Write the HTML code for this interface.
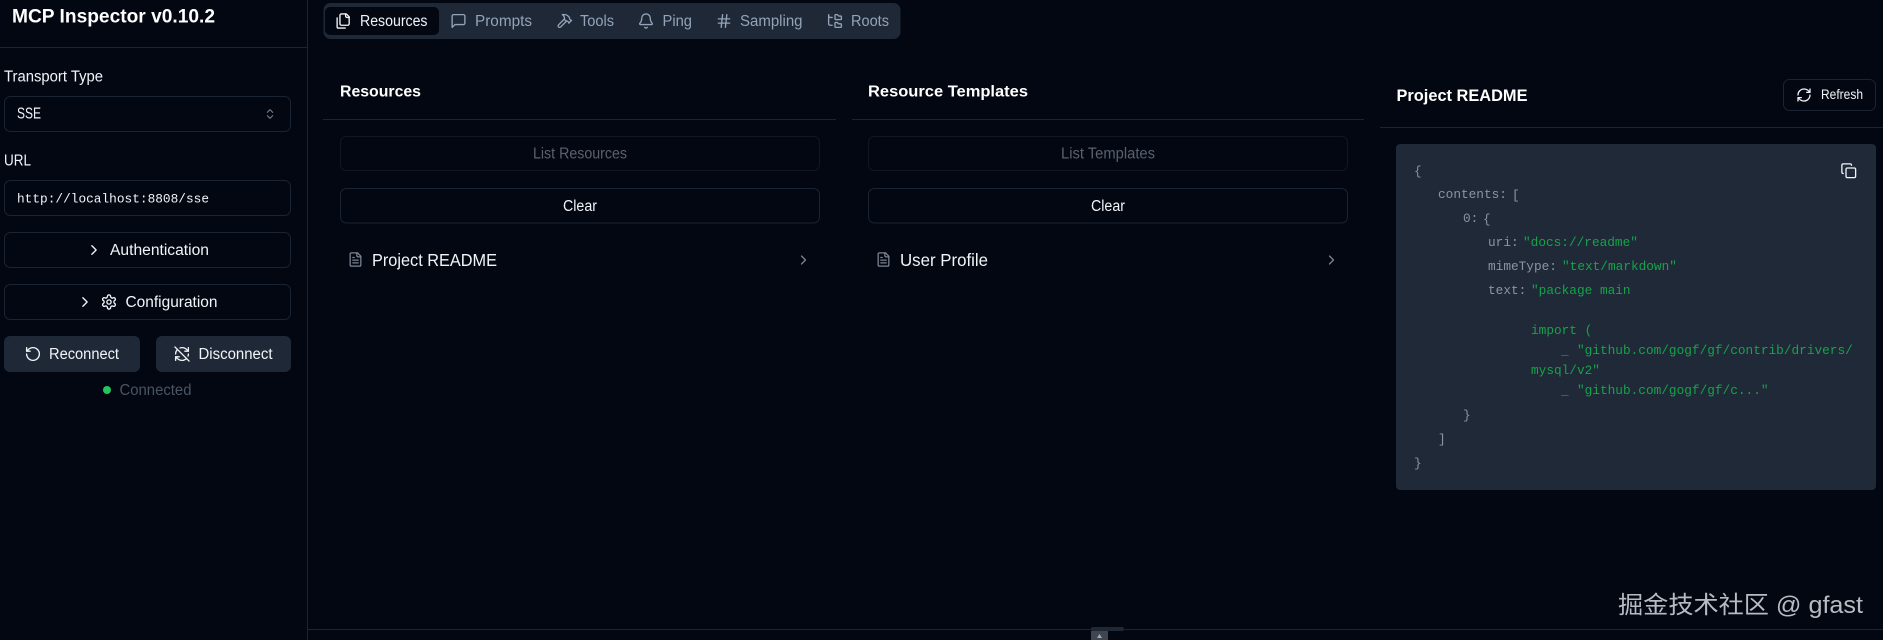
<!DOCTYPE html>
<html lang="en"><head><meta charset="utf-8"><title>MCP Inspector</title>
<style>
html,body{margin:0;padding:0;background:#020712;width:1883px;height:640px;overflow:hidden}
svg{display:block}
text{font-family:"Liberation Sans","Noto Sans CJK SC",sans-serif;font-size:15.5px;fill:#f1f5f9}
.b{font-weight:700;fill:#fff}
.m{font-family:"Liberation Mono",monospace;font-size:12.78px;fill:#8b94a1}
.g{fill:#16a34a}
.t{fill:#94a3b8}
.i{fill:none;stroke-width:1.9;stroke-linecap:round;stroke-linejoin:round}
</style></head><body>
<svg width="1883" height="640" viewBox="0 0 1883 640" xmlns="http://www.w3.org/2000/svg">
<defs>
<symbol id="files" viewBox="0 0 24 24"><path d="M20 7h-3a2 2 0 0 1-2-2V2"/><path d="M9 18a2 2 0 0 1-2-2V4a2 2 0 0 1 2-2h7l4 4v10a2 2 0 0 1-2 2Z"/><path d="M3 7.6v12.8A1.6 1.6 0 0 0 4.6 22h9.8"/></symbol>
<symbol id="msg" viewBox="0 0 24 24"><path d="M21 15a2 2 0 0 1-2 2H7l-4 4V5a2 2 0 0 1 2-2h14a2 2 0 0 1 2 2z"/></symbol>
<symbol id="hammer" viewBox="0 0 24 24"><path d="m15 12-8.373 8.373a1 1 0 1 1-3-3L12 9"/><path d="m18 15 4-4"/><path d="m21.5 11.5-1.914-1.914A2 2 0 0 1 19 8.172V7l-2.26-2.26a6 6 0 0 0-4.202-1.756L9 2.96l.92.82A6.18 6.18 0 0 1 12 8.4V10l2 2h1.172a2 2 0 0 1 1.414.586L18.5 14.5"/></symbol>
<symbol id="bell" viewBox="0 0 24 24"><path d="M10.268 21a2 2 0 0 0 3.464 0"/><path d="M3.262 15.326A1 1 0 0 0 4 17h16a1 1 0 0 0 .74-1.673C19.41 13.956 18 12.499 18 8A6 6 0 0 0 6 8c0 4.499-1.411 5.956-2.738 7.326"/></symbol>
<symbol id="hash" viewBox="0 0 24 24"><path d="M4 9h16M4 15h16M10 3 8 21M16 3l-2 18"/></symbol>
<symbol id="tree" viewBox="0 0 24 24"><path d="M20 10a1 1 0 0 0 1-1V6a1 1 0 0 0-1-1h-2.5a1 1 0 0 1-.8-.4l-.9-1.2A1 1 0 0 0 15 3h-2a1 1 0 0 0-1 1v5a1 1 0 0 0 1 1Z"/><path d="M20 21a1 1 0 0 0 1-1v-3a1 1 0 0 0-1-1h-2.9a1 1 0 0 1-.88-.55l-.42-.85a1 1 0 0 0-.92-.6H13a1 1 0 0 0-1 1v5a1 1 0 0 0 1 1Z"/><path d="M3 5a2 2 0 0 0 2 2h3"/><path d="M3 3v13a2 2 0 0 0 2 2h3"/></symbol>
<symbol id="chev" viewBox="0 0 24 24"><path d="m9 18 6-6-6-6"/></symbol>
<symbol id="updown" viewBox="0 0 24 24"><path d="m7 15 5 5 5-5"/><path d="m7 9 5-5 5 5"/></symbol>
<symbol id="gear" viewBox="0 0 24 24"><path d="M12.22 2h-.44a2 2 0 0 0-2 2v.18a2 2 0 0 1-1 1.73l-.43.25a2 2 0 0 1-2 0l-.15-.08a2 2 0 0 0-2.73.73l-.22.38a2 2 0 0 0 .73 2.73l.15.1a2 2 0 0 1 1 1.72v.51a2 2 0 0 1-1 1.74l-.15.09a2 2 0 0 0-.73 2.73l.22.38a2 2 0 0 0 2.73.73l.15-.08a2 2 0 0 1 2 0l.43.25a2 2 0 0 1 1 1.73V20a2 2 0 0 0 2 2h.44a2 2 0 0 0 2-2v-.18a2 2 0 0 1 1-1.73l.43-.25a2 2 0 0 1 2 0l.15.08a2 2 0 0 0 2.73-.73l.22-.39a2 2 0 0 0-.73-2.73l-.15-.08a2 2 0 0 1-1-1.74v-.5a2 2 0 0 1 1-1.74l.15-.09a2 2 0 0 0 .73-2.73l-.22-.38a2 2 0 0 0-2.73-.73l-.15.08a2 2 0 0 1-2 0l-.43-.25a2 2 0 0 1-1-1.73V4a2 2 0 0 0-2-2z"/><circle cx="12" cy="12" r="3"/></symbol>
<symbol id="ccw" viewBox="0 0 24 24"><path d="M3 12a9 9 0 1 0 9-9 9.75 9.75 0 0 0-6.74 2.74L3 8"/><path d="M3 3v5h5"/></symbol>
<symbol id="off" viewBox="0 0 24 24"><path d="M21 8L18.74 5.74A9.75 9.75 0 0 0 12 3C11 3 10.03 3.16 9.13 3.47"/><path d="M8 16H3v5"/><path d="M3 12C3 9.51 4 7.26 5.64 5.64"/><path d="m3 16 2.26 2.26A9.75 9.75 0 0 0 12 21c2.49 0 4.74-1 6.36-2.64"/><path d="M21 12c0 1-.16 1.97-.47 2.87"/><path d="M21 3v5h-5"/><path d="M22 22 2 2"/></symbol>
<symbol id="cw" viewBox="0 0 24 24"><path d="M3 12a9 9 0 0 1 9-9 9.75 9.75 0 0 1 6.74 2.74L21 8"/><path d="M21 3v5h-5"/><path d="M21 12a9 9 0 0 1-9 9 9.75 9.75 0 0 1-6.74-2.74L3 16"/><path d="M8 16H3v5"/></symbol>
<symbol id="copy" viewBox="0 0 24 24"><rect x="8" y="8" width="14" height="14" rx="2"/><path d="M4 16c-1.1 0-2-.9-2-2V4c0-1.1.9-2 2-2h10c1.1 0 2 .9 2 2"/></symbol>
<symbol id="file" viewBox="0 0 24 24"><path d="M15 2H6a2 2 0 0 0-2 2v16a2 2 0 0 0 2 2h12a2 2 0 0 0 2-2V7Z"/><path d="M14 2v4a2 2 0 0 0 2 2h4"/><path d="M10 9H8"/><path d="M16 13H8"/><path d="M16 17H8"/></symbol>
</defs>
<rect width="1883" height="640" fill="#020712"/>

<!-- sidebar -->
<rect x="307" y="0" width="1" height="640" fill="#1b2433"/>
<rect x="0" y="47" width="307" height="1" fill="#1b2433"/>
<text class="b" x="12" y="22.500" style="font-size:19px" textLength="203" lengthAdjust="spacingAndGlyphs">MCP Inspector v0.10.2</text>
<text x="4" y="81.500" textLength="99" lengthAdjust="spacingAndGlyphs">Transport Type</text>
<rect x="4.500" y="96.500" width="286" height="35" rx="6" fill="none" stroke="#1b2433"/>
<text x="17" y="118.500" textLength="24" lengthAdjust="spacingAndGlyphs">SSE</text>
<use href="#updown" x="263.500" y="107.500" width="13" height="13" class="i" stroke="#7c8594"/>
<text x="4" y="165.500" textLength="27" lengthAdjust="spacingAndGlyphs">URL</text>
<rect x="4.500" y="180.500" width="286" height="35" rx="6" fill="none" stroke="#1b2433"/>
<text class="m" x="17" y="202.500" style="fill:#f1f5f9" textLength="192">http://localhost:8808/sse</text>
<rect x="4.500" y="232.500" width="286" height="35" rx="6" fill="none" stroke="#1b2433"/>
<use href="#chev" x="85.500" y="241.500" width="17" height="17" class="i" stroke="#f1f5f9"/>
<text x="110" y="255" textLength="99" lengthAdjust="spacingAndGlyphs">Authentication</text>
<rect x="4.500" y="284.500" width="286" height="35" rx="6" fill="none" stroke="#1b2433"/>
<use href="#chev" x="76.500" y="293.500" width="17" height="17" class="i" stroke="#f1f5f9"/>
<use href="#gear" x="100.500" y="293.500" width="17" height="17" class="i" stroke="#f1f5f9"/>
<text x="125.500" y="307" textLength="92" lengthAdjust="spacingAndGlyphs">Configuration</text>
<rect x="4" y="336" width="136" height="36" rx="6" fill="#1e2836"/>
<use href="#ccw" x="24.500" y="345.500" width="17" height="17" class="i" stroke="#f1f5f9"/>
<text x="49" y="359" textLength="70" lengthAdjust="spacingAndGlyphs">Reconnect</text>
<rect x="156" y="336" width="135" height="36" rx="6" fill="#1e2836"/>
<use href="#off" x="173.500" y="345.500" width="17" height="17" class="i" stroke="#f1f5f9"/>
<text x="198.500" y="359" textLength="74" lengthAdjust="spacingAndGlyphs">Disconnect</text>
<circle cx="107" cy="390" r="4" fill="#22c55e"/>
<text x="119.500" y="395" textLength="72" lengthAdjust="spacingAndGlyphs" style="fill:#4b5462">Connected</text>

<!-- tabs -->
<rect x="323.500" y="3" width="577" height="36" rx="7" fill="#1e2836"/>
<rect x="325" y="7" width="114" height="28" rx="5" fill="#020712"/>
<use href="#files" x="335" y="12.500" width="17" height="17" class="i" stroke="#f1f5f9"/>
<text x="360" y="26" textLength="67.500" lengthAdjust="spacingAndGlyphs">Resources</text>
<use href="#msg" x="450" y="12.500" width="17" height="17" class="i" stroke="#94a3b8"/>
<text class="t" x="475" y="26" textLength="57" lengthAdjust="spacingAndGlyphs">Prompts</text>
<use href="#hammer" x="556" y="12.500" width="17" height="17" class="i" stroke="#94a3b8"/>
<text class="t" x="580" y="26" textLength="34" lengthAdjust="spacingAndGlyphs">Tools</text>
<use href="#bell" x="637.500" y="12.500" width="17" height="17" class="i" stroke="#94a3b8"/>
<text class="t" x="662.500" y="26" textLength="29.500" lengthAdjust="spacingAndGlyphs">Ping</text>
<use href="#hash" x="715.500" y="12.500" width="17" height="17" class="i" stroke="#94a3b8"/>
<text class="t" x="740" y="26" textLength="62.500" lengthAdjust="spacingAndGlyphs">Sampling</text>
<use href="#tree" x="826.500" y="12.500" width="17" height="17" class="i" stroke="#94a3b8"/>
<text class="t" x="851" y="26" textLength="38" lengthAdjust="spacingAndGlyphs">Roots</text>

<!-- resources column -->
<text class="b" x="340" y="96.500" style="font-size:16px" textLength="81" lengthAdjust="spacingAndGlyphs">Resources</text>
<rect x="323" y="119" width="513" height="1" fill="#1b2433"/>
<rect x="340.500" y="136.500" width="479" height="34" rx="6" fill="none" stroke="#111825"/>
<text x="533" y="158.500" textLength="94" lengthAdjust="spacingAndGlyphs" style="fill:#5a616d">List Resources</text>
<rect x="340.500" y="188.500" width="479" height="34.500" rx="6" fill="none" stroke="#1b2433"/>
<text x="563" y="211" textLength="34" lengthAdjust="spacingAndGlyphs">Clear</text>
<use href="#file" x="347.500" y="251.500" width="16" height="16" class="i" stroke="#7c8594"/>
<text x="372" y="266" style="font-size:17.500px" textLength="125" lengthAdjust="spacingAndGlyphs">Project README</text>
<use href="#chev" x="795.500" y="252" width="16" height="16" class="i" stroke="#7c8594"/>

<!-- templates column -->
<text class="b" x="868" y="96.500" style="font-size:16px" textLength="160" lengthAdjust="spacingAndGlyphs">Resource Templates</text>
<rect x="852" y="119" width="512" height="1" fill="#1b2433"/>
<rect x="868.500" y="136.500" width="479" height="34" rx="6" fill="none" stroke="#111825"/>
<text x="1061" y="158.500" textLength="94" lengthAdjust="spacingAndGlyphs" style="fill:#5a616d">List Templates</text>
<rect x="868.500" y="188.500" width="479" height="34.500" rx="6" fill="none" stroke="#1b2433"/>
<text x="1091" y="211" textLength="34" lengthAdjust="spacingAndGlyphs">Clear</text>
<use href="#file" x="875.500" y="251.500" width="16" height="16" class="i" stroke="#7c8594"/>
<text x="900" y="266" style="font-size:17.500px" textLength="88" lengthAdjust="spacingAndGlyphs">User Profile</text>
<use href="#chev" x="1323.500" y="252" width="16" height="16" class="i" stroke="#7c8594"/>

<!-- readme panel -->
<text class="b" x="1396.500" y="101" style="font-size:17px" textLength="131" lengthAdjust="spacingAndGlyphs">Project README</text>
<rect x="1783.500" y="79.500" width="92" height="31" rx="6" fill="none" stroke="#1b2433"/>
<use href="#cw" x="1796" y="87" width="16" height="16" class="i" stroke="#f1f5f9"/>
<text x="1821" y="99" style="font-size:14px" textLength="42" lengthAdjust="spacingAndGlyphs">Refresh</text>
<rect x="1380" y="127" width="503" height="1" fill="#1b2433"/>
<rect x="1396" y="144" width="480" height="346" rx="4" fill="#1f2937"/>
<use href="#copy" x="1840.500" y="162.500" width="16.500" height="16.500" class="i" stroke="#f1f5f9"/>
<text class="m" x="1414" y="175">{</text>
<text class="m" x="1438" y="198">contents:</text><text class="m" x="1512" y="199">[</text>
<text class="m" x="1463" y="222">0:</text><text class="m" x="1483" y="223">{</text>
<text class="m" x="1488" y="246">uri:</text><text class="m g" x="1523" y="246">"docs://readme"</text>
<text class="m" x="1488" y="270">mimeType:</text><text class="m g" x="1562" y="270">"text/markdown"</text>
<text class="m" x="1488" y="294">text:</text><text class="m g" x="1531" y="294">"package main</text>
<text class="m g" x="1531" y="334">import (</text>
<text class="m g" x="1561" y="354">_</text><text class="m g" x="1577" y="354">"github.com/gogf/gf/contrib/drivers/</text>
<text class="m g" x="1531" y="374">mysql/v2"</text>
<text class="m g" x="1561" y="394">_</text><text class="m g" x="1577" y="394">"github.com/gogf/gf/c..."</text>
<text class="m" x="1463" y="419">}</text>
<text class="m" x="1438" y="443">]</text>
<text class="m" x="1414" y="467">}</text>

<!-- bottom -->
<rect x="308" y="629" width="1575" height="1" fill="#1b2433"/>
<rect x="1091" y="627" width="33" height="4" rx="2" fill="#1e2836"/>
<rect x="1091" y="631" width="17" height="9" fill="#3f4652"/>
<path d="M1099.500 634l-2.500 4h5z" fill="#a3a9b3"/>
<text x="1618" y="613" style="font-size:24px;fill:#b8bcc2" textLength="245" lengthAdjust="spacingAndGlyphs">掘金技术社区 @ gfast</text>
</svg>
</body></html>
